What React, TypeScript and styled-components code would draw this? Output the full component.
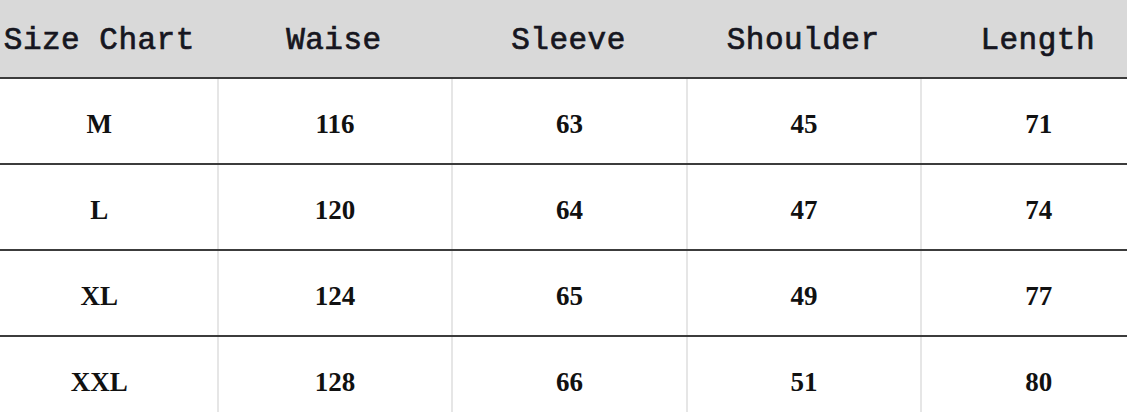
import * as React from 'react'
import styled, { createGlobalStyle } from 'styled-components'

const GlobalStyle = createGlobalStyle`
  html, body {
    margin: 0;
    padding: 0;
    background: #ffffff;
    overflow: hidden;
  }
`

const Page = styled.div`
  width: 1127px;
  height: 412px;
  overflow: hidden;
  background: #ffffff;
`

const Table = styled.div`
  width: 1173px;
  margin-left: -18px;
`

const Row = styled.div<{ $head?: boolean }>`
  display: grid;
  grid-template-columns: repeat(5, 1fr);
  height: ${p => (p.$head ? '77px' : '84px')};
  background: ${p => (p.$head ? '#d9d9d9' : '#ffffff')};
  border-bottom: 2px solid #3c3c3c;
`

const HeadCell = styled.div`
  display: flex;
  align-items: center;
  justify-content: center;
  padding-top: 3px;
  box-sizing: border-box;
  font-family: "Liberation Mono", "Courier New", monospace;
  font-size: 31px;
  font-weight: normal;
  -webkit-text-stroke: 0.7px #161620;
  color: #161620;
  letter-spacing: 0.5px;
  white-space: nowrap;
`

const Cell = styled.div<{ $first?: boolean }>`
  display: flex;
  align-items: center;
  justify-content: center;
  padding-top: 6px;
  box-sizing: border-box;
  font-family: "Liberation Serif", "Times New Roman", serif;
  font-size: 27px;
  font-weight: bold;
  color: #111111;
  border-left: ${p => (p.$first ? 'none' : '2px solid #e6e6e6')};
`

const headers = ['Size Chart', 'Waise', 'Sleeve', 'Shoulder', 'Length']

const rows = [
  ['M', '116', '63', '45', '71'],
  ['L', '120', '64', '47', '74'],
  ['XL', '124', '65', '49', '77'],
  ['XXL', '128', '66', '51', '80'],
]

const App = () => {
  return (
    <Page>
      <GlobalStyle />
      <Table>
        <Row $head>
          {headers.map(h => (
            <HeadCell key={h}>{h}</HeadCell>
          ))}
        </Row>
        {rows.map(r => (
          <Row key={r[0]}>
            {r.map((v, i) => (
              <Cell key={i} $first={i === 0}>
                {v}
              </Cell>
            ))}
          </Row>
        ))}
      </Table>
    </Page>
  )
}

export default App
